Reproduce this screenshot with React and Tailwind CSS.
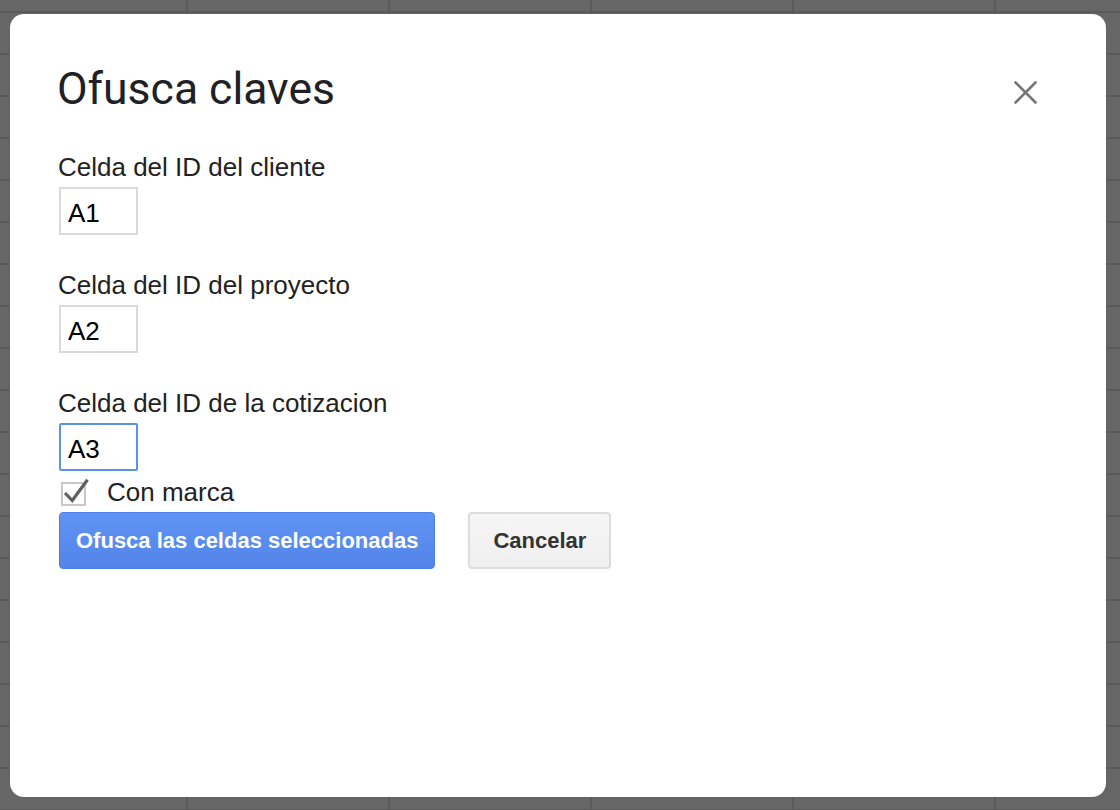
import React from "react";

function Field({ label, value, focused, first }) {
  return (
    <div className={first ? "mt-[41px]" : "mt-[36px]"}>
      <div className="text-[26px] leading-[29px] text-[#222222] -ml-[1px]">{label}</div>
      <div
        className={
          "mt-[5px] box-border h-[48px] w-[79px] border-2 pl-[7px] pt-[2px] text-[26px] leading-[44px] text-black " +
          (focused ? "border-[#5b8ff2] rounded-[2px]" : "border-[#dadada]")
        }
      >
        {value}
      </div>
    </div>
  );
}

export default function App() {
  return (
    <div className="w-[1120px] h-[810px] overflow-hidden bg-[#666666] bg-[linear-gradient(to_right,#5a5a5a_2px,transparent_2px),linear-gradient(to_bottom,#5a5a5a_2px,transparent_2px)] bg-size-[202px_42px] bg-position-[186px_11px] pt-[14px] pl-[10px]">
      <div className="box-border w-[1096px] h-[783px] rounded-[14px] bg-white pt-[53px] pl-[49px] pr-[69px] font-['Liberation_Sans',Arial,sans-serif]">
        <div className="flex items-start justify-between">
          <h1 className="-ml-[2px] h-[45px] text-[44.5px] leading-[45px] font-normal text-[#202124] font-[Roboto,sans-serif]">
            Ofusca claves
          </h1>
          <svg className="mt-[14px]" width="23" height="23" viewBox="0 0 23 23">
            <path d="M1.5 1.5 L21.5 21.5 M21.5 1.5 L1.5 21.5" stroke="#757575" strokeWidth="2.6" strokeLinecap="round" />
          </svg>
        </div>

        <Field first label="Celda del ID del cliente" value="A1" />
        <Field label="Celda del ID del proyecto" value="A2" />
        <Field label="Celda del ID de la cotizacion" value="A3" focused />

        <div className="mt-[7px] flex h-[29px] items-center">
          <svg className="ml-[1px]" width="30" height="29" viewBox="0 0 30 29">
            <rect x="2" y="5" width="23" height="22" fill="none" stroke="#c8c8c8" strokeWidth="2" />
            <path d="M5 15 L12.3 22.5 L27.5 1.8" fill="none" stroke="#606060" strokeWidth="3.2" />
          </svg>
          <span className="ml-[17px] text-[26px] leading-[29px] text-[#222222]">Con marca</span>
        </div>

        <div className="mt-[5px] flex items-start">
          <button className="box-border flex h-[57px] items-center rounded-[4px] border border-[#4a7fe6] bg-[linear-gradient(to_bottom,#5f93f3,#5385e9)] px-[16px] text-[22px] font-bold text-white">
            Ofusca las celdas seleccionadas
          </button>
          <button className="ml-[33px] box-border flex h-[57px] w-[143px] items-center justify-center rounded-[4px] border-2 border-[#dcdcdc] bg-[linear-gradient(to_bottom,#f5f5f5,#f0f0f0)] text-[22px] font-bold text-[#333333]">
            Cancelar
          </button>
        </div>
      </div>
    </div>
  );
}
